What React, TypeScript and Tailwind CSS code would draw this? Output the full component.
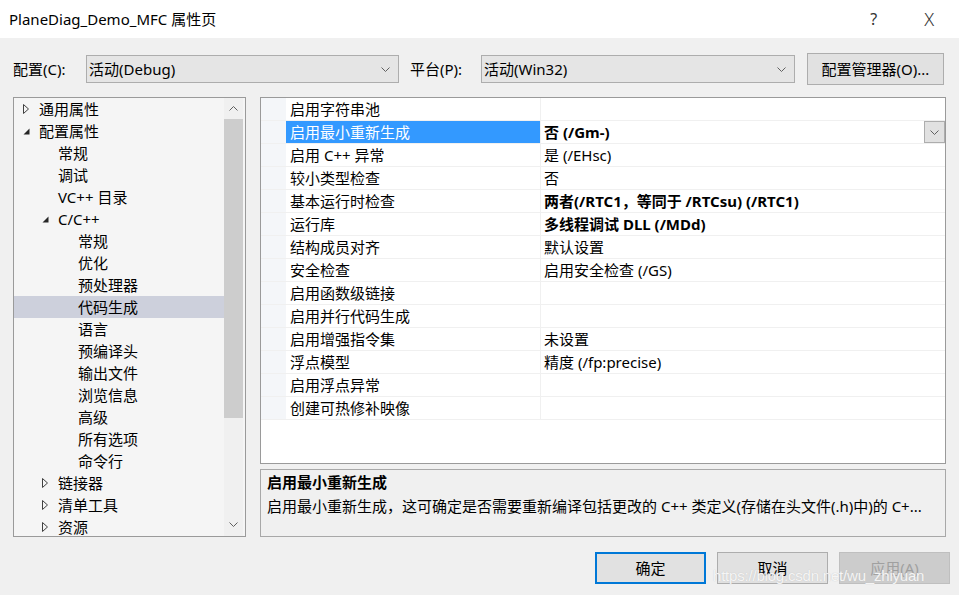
import React from 'react'

type TreeItem = { label: string; level: 0 | 1 | 2; state?: 'open' | 'closed'; selected?: boolean }

const tree: TreeItem[] = [
	{ label: '通用属性', level: 0, state: 'closed' },
	{ label: '配置属性', level: 0, state: 'open' },
	{ label: '常规', level: 1 },
	{ label: '调试', level: 1 },
	{ label: 'VC++ 目录', level: 1 },
	{ label: 'C/C++', level: 1, state: 'open' },
	{ label: '常规', level: 2 },
	{ label: '优化', level: 2 },
	{ label: '预处理器', level: 2 },
	{ label: '代码生成', level: 2, selected: true },
	{ label: '语言', level: 2 },
	{ label: '预编译头', level: 2 },
	{ label: '输出文件', level: 2 },
	{ label: '浏览信息', level: 2 },
	{ label: '高级', level: 2 },
	{ label: '所有选项', level: 2 },
	{ label: '命令行', level: 2 },
	{ label: '链接器', level: 1, state: 'closed' },
	{ label: '清单工具', level: 1, state: 'closed' },
	{ label: '资源', level: 1, state: 'closed' },
]

type Prop = { name: string; value: string; bold?: boolean; selected?: boolean }

const props: Prop[] = [
	{ name: '启用字符串池', value: '' },
	{ name: '启用最小重新生成', value: '否 (/Gm-)', bold: true, selected: true },
	{ name: '启用 C++ 异常', value: '是 (/EHsc)' },
	{ name: '较小类型检查', value: '否' },
	{ name: '基本运行时检查', value: '两者(/RTC1，等同于 /RTCsu) (/RTC1)', bold: true },
	{ name: '运行库', value: '多线程调试 DLL (/MDd)', bold: true },
	{ name: '结构成员对齐', value: '默认设置' },
	{ name: '安全检查', value: '启用安全检查 (/GS)' },
	{ name: '启用函数级链接', value: '' },
	{ name: '启用并行代码生成', value: '' },
	{ name: '启用增强指令集', value: '未设置' },
	{ name: '浮点模型', value: '精度 (/fp:precise)' },
	{ name: '启用浮点异常', value: '' },
	{ name: '创建可热修补映像', value: '' },
]

const indent = ['pl-[9px]', 'pl-[28px]', 'pl-[48px]']

function Chevron({ up = false }: { up?: boolean }) {
	return (
		<svg width="9" height="5" viewBox="0 0 9 5" className={up ? 'rotate-180' : ''}>
			<path d="M0.5 0.5 L4.5 4.5 L8.5 0.5" fill="none" stroke="#606060" strokeWidth="1" />
		</svg>
	)
}

function Arrow({ state }: { state?: 'open' | 'closed' }) {
	if (state === 'open') {
		return (
			<svg width="7" height="7" viewBox="0 0 7 7">
				<path d="M6.5 0.5 L6.5 6.5 L0.5 6.5 Z" fill="#262626" />
			</svg>
		)
	}
	if (state === 'closed') {
		return (
			<svg width="6" height="10" viewBox="0 0 6 10">
				<path d="M0.5 0.5 L5.5 5 L0.5 9.5 Z" fill="none" stroke="#404040" strokeWidth="1" />
			</svg>
		)
	}
	return null
}

function Dropdown({ value, width }: { value: string; width: string }) {
	return (
		<div className={`${width} h-[28px] flex items-center justify-between bg-[#e5e5e5] border border-[#adadad] pl-[2px] pr-[8px]`}>
			<span>{value}</span>
			<Chevron />
		</div>
	)
}

export default function App() {
	return (
		<div className="w-[959px] h-[595px] bg-[#f0f0f0] flex flex-col text-[15px] text-black font-['Segoe_UI','Noto_Sans','Noto_Sans_CJK_SC',sans-serif] leading-none overflow-hidden relative">
			{/* Title bar */}
			<div className="h-[38px] bg-white flex items-center justify-between pl-[9px] pr-[25px] shrink-0">
				<span className="text-[15px]">PlaneDiag_Demo_MFC 属性页</span>
				<div className="flex items-center gap-[47px] text-[16px] text-[#333]">
					<span>?</span>
					<span className="font-light text-[18px]">X</span>
				</div>
			</div>

			{/* Configuration row */}
			<div className="mt-[15px] h-[32px] flex items-center pl-[13px] shrink-0">
				<span className="w-[73px]">配置(C):</span>
				<Dropdown value="活动(Debug)" width="w-[313px]" />
				<span className="ml-[11px] w-[71px]">平台(P):</span>
				<Dropdown value="活动(Win32)" width="w-[314px]" />
				<button className="ml-[12px] w-[137px] h-[32px] bg-[#e1e1e1] border border-[#adadad] text-[15px]">
					配置管理器(O)...
				</button>
			</div>

			{/* Main area */}
			<div className="mt-[12px] flex pl-[13px] gap-[14px] shrink-0">
				{/* Tree */}
				<div className="w-[233px] h-[440px] border border-[#9a9a9a] bg-[#f5f5f5] flex overflow-hidden">
					<div className="flex-1 flex flex-col">
						{tree.map((item, i) => (
							<div
								key={i}
								className={`h-[22px] shrink-0 flex items-center ${indent[item.level]} ${item.selected ? 'bg-[#cdd0dc]' : ''}`}
							>
								<div className="w-[16px] flex items-center">
									<Arrow state={item.state} />
								</div>
								<span>{item.label}</span>
							</div>
						))}
					</div>
					<div className="w-[19px] mr-[2px] bg-[#f0f0f0] flex flex-col items-center">
						<div className="h-[21px] flex items-center justify-center">
							<Chevron up />
						</div>
						<div className="w-full h-[299px] bg-[#cdcdcd]" />
						<div className="flex-1" />
						<div className="h-[20px] flex items-center justify-center mb-[2px]">
							<Chevron />
						</div>
					</div>
				</div>

				{/* Right column */}
				<div className="w-[686px] flex flex-col gap-[5px]">
					<div className="h-[367px] border border-[#9a9a9a] bg-white">
						{props.map((p, i) => (
							<div key={i} className="h-[23px] flex border-b border-[#f0f0f0]">
								<div className="w-[25px] bg-[#f4f6f9]" />
								<div
									className={`w-[255px] flex items-center pl-[4px] border-r border-[#f0f0f0] ${p.selected ? 'bg-[#3399ff] text-white' : ''}`}
								>
									{p.name}
								</div>
								<div className={`flex-1 flex items-center justify-between pl-[3px] ${p.bold ? 'font-bold' : ''}`}>
									<span>{p.value}</span>
									{p.selected && (
										<div className="w-[21px] h-[22px] bg-[#e1e1e1] border border-[#adadad] flex items-center justify-center">
											<Chevron />
										</div>
									)}
								</div>
							</div>
						))}
					</div>
					<div className="h-[68px] border border-[#a8a8a8] bg-[#f0f0f0] px-[6px] pt-[5px] flex flex-col gap-[9px]">
						<span className="font-bold text-[15px]">启用最小重新生成</span>
						<span className="text-[15px] whitespace-nowrap">
							启用最小重新生成，这可确定是否需要重新编译包括更改的 C++ 类定义(存储在头文件(.h)中)的 C+...
						</span>
					</div>
				</div>
			</div>

			{/* Buttons */}
			<div className="mt-[15px] flex justify-end gap-[11px] pr-[9px]">
				<button className="w-[111px] h-[32px] bg-[#e1e1e1] border-2 border-[#0078d7]">确定</button>
				<button className="w-[111px] h-[32px] bg-[#e1e1e1] border border-[#adadad]">取消</button>
				<button className="w-[111px] h-[32px] bg-[#cccccc] border border-[#bfbfbf] text-[#a0a0a0]">应用(A)</button>
			</div>

			{/* Watermark */}
			<span className="absolute left-[713px] top-[568px] text-[15px] tracking-[-0.2px] text-white/85 font-['Liberation_Sans',sans-serif] [text-shadow:0_0_1px_#b8b8b8]">
				https://blog.csdn.net/wu_zhiyuan
			</span>
		</div>
	)
}
